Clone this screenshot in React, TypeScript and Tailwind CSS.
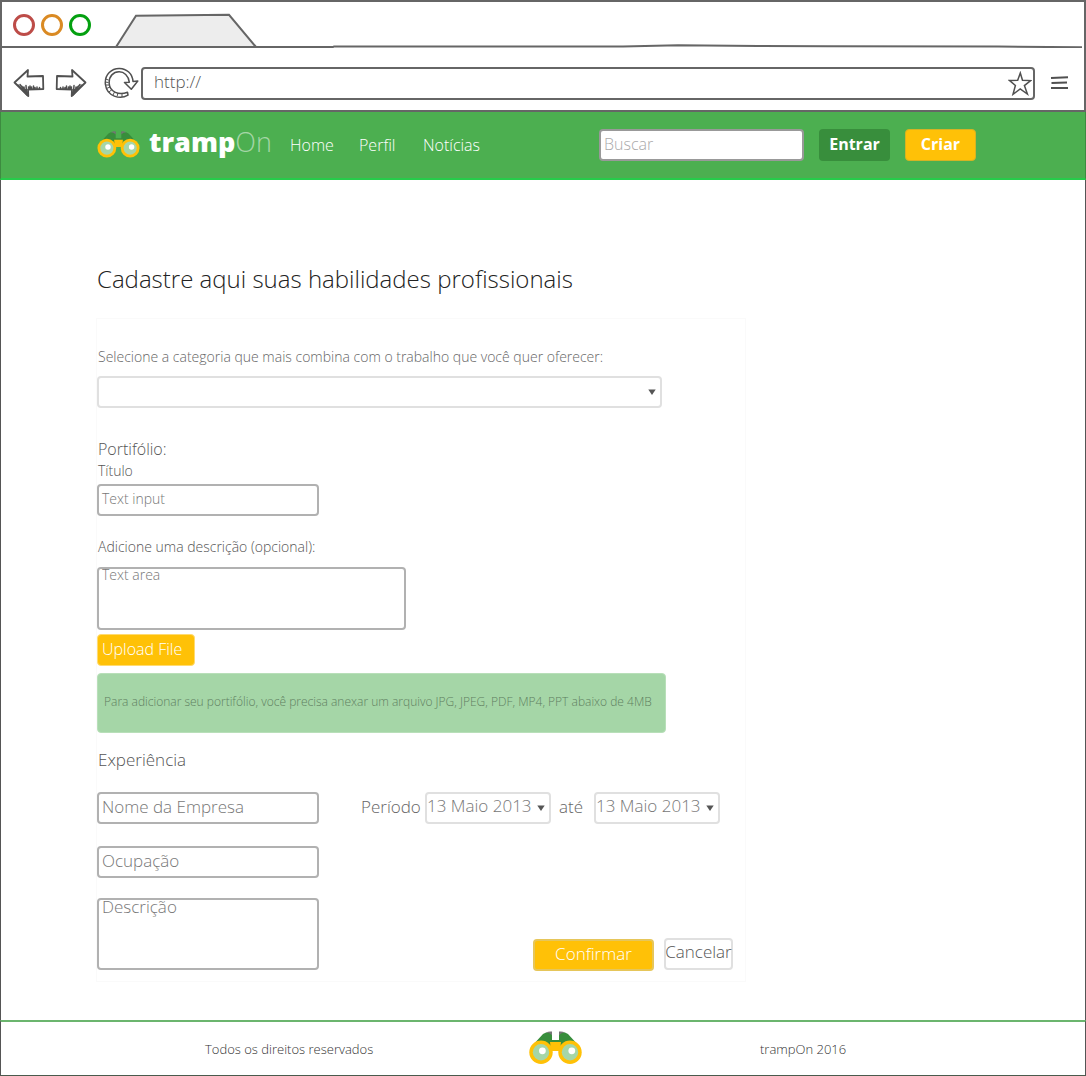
import type { ReactNode } from "react";

function Binoculars({ className }: { className: string }) {
  return (
    <svg className={className} viewBox="0 0 53 33" aria-hidden="true">
      <path d="M3 15 L14 3 Q17 0.5 23 1 L23 9 L30 9 L30 1 Q36 0.5 39 3 L50 15 L41 22 L30 14 L23 14 L12 22 Z" fill="#388e3c" />
      <path d="M17 1.5 Q20 0 23 .6 V4.5 Q21 1.5 17 1.5 Z M36 1.5 Q33 0 30 .6 V4.5 Q32 1.5 36 1.5 Z" fill="#757575" />
      <path d="M21 11 H32 L31 20 H22 Z" fill="#ffc107" />
      <circle cx="12" cy="21.3" r="11.7" fill="#ffc107" />
      <circle cx="41" cy="21.3" r="11.7" fill="#ffc107" />
      <circle cx="12" cy="21.3" r="8.2" fill="#a5d6a7" />
      <circle cx="41" cy="21.3" r="8.2" fill="#a5d6a7" />
      <circle cx="13.4" cy="19.8" r="3.4" fill="#fff" />
      <circle cx="42.8" cy="19.8" r="3.4" fill="#fff" />
    </svg>
  );
}

function Arrow({ className }: { className: string }) {
  return (
    <svg className={className} viewBox="0 0 32 30" fill="none" stroke="#505050" strokeLinecap="round" strokeLinejoin="round">
      <path d="M1.5 14.5 L15 2 L14.5 8.5 L30 8 L30.3 21 L15 21.5 L15.3 28 Z" strokeWidth="1.8" />
      <path d="M5 17 L14 27 M7 16.5 L14.5 26 M8.5 18 L15 25 M11 19 L11.5 23 M13 17.5 L13.5 24 M15.5 19 L16 21 M17 18 V21 M18.5 19 V21 M20.5 18 V21 M22 19.5 V21 M24 19 V21 M26.5 19.5 V21" strokeWidth="1.5" />
    </svg>
  );
}

function Reload() {
  return (
    <svg className="h-[32px] w-[35px]" viewBox="0 0 35 32" fill="none" stroke="#505050" strokeLinejoin="round">
      <path
        d="M23.5 25.2 L24 28.2 C16 32.8 3 29.5 1.4 17.5 C.3 7 8 1.2 15.5 1.4 C22.5 1.5 28.5 6.5 29 14.5 L33.8 14 L27.3 22.3 L20.5 15.5 L25.3 15.2 C24.5 8.5 20 4.7 15 4.8 C9.5 4.9 4.7 9 5.2 16.5 C5.8 25 15 28.8 23.5 25.2 Z"
        strokeWidth="1.5"
      />
      <path d="M1.5 12 L4.5 13 M1 15 L4.5 15.5 M1.5 18 L5 18 M2.5 21.5 L6 20 M5 25 L8 22.5 M9 28 L10.5 25 M13 29.5 L14 26 M18 30 V26.5" strokeWidth="1" />
    </svg>
  );
}

function Browser() {
  return (
    <div className="h-[112px] border-2 border-[#666] bg-white">
      <div className="flex h-[46px]">
        <div className="flex gap-[6px] pt-[12px] pl-[11px]">
          <i className="size-[22px] rounded-full border-3 border-[#bd4c48]" />
          <i className="size-[22px] rounded-full border-3 border-[#da8a23]" />
          <i className="size-[22px] rounded-full border-3 border-[#04a010]" />
        </div>
        <svg className="-ml-[91px] h-[46px] w-[1082px] shrink-0" viewBox="2 2 1082 46" fill="none" stroke="#666" strokeWidth="2">
          <path d="M118 47 L138 15.7 L231 14.8 L258 47" fill="#ededed" />
          <path d="M0 47 H335 L336 46.4 H625 L680 45.3 L760 46 L830 46.3 L1000 46.6 L1086 47.3" />
        </svg>
      </div>
      <div className="flex h-[62px] items-start">
        <Arrow className="mt-[20px] ml-[11px] h-[30px] w-[32px]" />
        <Arrow className="mt-[20px] ml-[10px] h-[30px] w-[32px] -scale-x-100" />
        <div className="mt-[19px] ml-[17px]"><Reload /></div>
        <div className="mt-[19px] ml-[2px] flex h-[33px] w-[894px] items-start justify-between rounded-[4px] border-2 border-[#666] pl-[11px]">
          <span className="text-[17px] leading-[26px] text-[#555]">http://</span>
          <svg className="mt-[2px] mr-[1px] h-[25px] w-[24px]" viewBox="0 0 24 25" fill="none" stroke="#505050" strokeWidth="1.5">
            <path d="M12.3 2 L14.5 9.3 L22.7 9.6 L16.4 14.6 L19.4 23 L12.2 18 L5 23.3 L7.4 14.5 L1.4 9.4 L9.7 9.2 Z" />
          </svg>
        </div>
        <svg className="mt-[27px] ml-[15px] h-[16px] w-[20px]" viewBox="0 0 20 16" stroke="#505050" strokeWidth="2">
          <path d="M1 3 L18 2.3 M1.5 8 L17 7.5 M1 13 H18" />
        </svg>
      </div>
    </div>
  );
}

function Header() {
  return (
    <header className="flex h-[68px] items-start border-x border-b-2 border-x-[#3d8b40] border-b-[#26cc4a] bg-[#4caf50] text-white">
      <Binoculars className="mt-[19px] ml-[96px] h-[26.5px] w-[43px]" />
      <div className="ml-[9px] mt-[12px] w-[141px] text-[27px] leading-[36px] font-extrabold tracking-[0px] whitespace-nowrap">
        tramp<span className="font-light text-[#a5d6a7]">On</span>
      </div>
      <nav className="mt-[22px] flex text-[16px] leading-[22px] font-light">
        <a className="w-[69px]">Home</a>
        <a className="w-[64px]">Perfil</a>
        <a className="w-[176px]">Notícias</a>
      </nav>
      <div className="mt-[17px] h-[32px] w-[205px] rounded-[4px] border-2 border-[#999] bg-white pl-[3px] text-[16px] leading-[27px] text-[#aaa]">
        Buscar
      </div>
      <button className="mt-[17px] ml-[15px] h-[32px] w-[71px] rounded-[4px] bg-[#388e3c] pb-[2px] text-[16px] leading-[24px] font-bold">Entrar</button>
      <button className="mt-[17px] ml-[15px] h-[32px] w-[71px] rounded-[4px] border border-[#d5b324] bg-[#ffc107] pb-[2px] text-[16px] leading-[24px] font-bold">Criar</button>
    </header>
  );
}

function Field({ className, children }: { className: string; children?: ReactNode }) {
  return <div className={`rounded-[4px] border-2 border-[#b1b1b1] pl-[3px] whitespace-nowrap text-[#777] ${className}`}>{children}</div>;
}

function Caret() {
  return (
    <svg className="h-[6px] w-[8px]" viewBox="0 0 8 6">
      <path d="M0.3 0.5 H7.7 L4 6 Z" fill="#555" />
    </svg>
  );
}

function DateSelect({ className }: { className: string }) {
  return (
    <div className={`flex h-[32px] w-[126px] items-start justify-between rounded-[4px] border-2 border-[#e0e0e0] pr-[4px] text-[17px] leading-[24px] text-[#777] ${className}`}>
      <span>13 Maio 2013</span>
      <span className="mt-[11px] flex"><Caret /></span>
    </div>
  );
}

export default function App() {
  return (
    <div className="flex h-[1076px] w-[1086px] flex-col overflow-hidden bg-white font-['Open_Sans',sans-serif] font-light">
      <Browser />
      <Header />
      <main className="h-[840px] border-x border-[#555] pl-[95px]">
        <h1 className="mt-[83px] ml-px h-[32px] text-[24px] leading-[32px] text-[#222]">Cadastre aqui suas habilidades profissionais</h1>
        <form className="mt-[23px] flex h-[664px] w-[650px] flex-col items-start border border-[#fafafa]">
          <label className="mt-[28px] ml-px text-[14px] leading-[20px] text-[#666]">
            Selecione a categoria que mais combina com o trabalho que você quer oferecer:
          </label>
          <div className="mt-[9px] flex h-[32px] w-[565px] items-center justify-end rounded-[4px] border-2 border-[#e0e0e0] pr-[4px]"><Caret /></div>
          <h2 className="mt-[30px] ml-px text-[16px] leading-[22px] text-[#555]">Portifólio:</h2>
          <label className="ml-px text-[14px] leading-[22px] text-[#555]">Título</label>
          <Field className="mt-[2px] h-[32px] w-[222px] text-[14px] leading-[26px]">Text input</Field>
          <label className="mt-[21px] ml-px text-[14px] leading-[20px] text-[#555]">Adicione uma descrição (opcional):</label>
          <Field className="mt-[10px] h-[63px] w-[309px] text-[14px] leading-[12px]">Text area</Field>
          <button type="button" className="mt-[4px] h-[32px] w-[98px] rounded-[4px] border border-[#ffdb70] bg-[#ffc107] pb-[2px] pl-[4px] text-left text-[16px] leading-[24px] text-white">Upload File</button>
          <p className="mt-[7px] h-[60px] w-[569px] rounded-[4px] border border-[#b8dfb9] bg-[#a5d6a7] pl-[6px] text-[12px] leading-[56px] whitespace-nowrap text-[#5f7f61]">
            Para adicionar seu portifólio, você precisa anexar um arquivo JPG, JPEG, PDF, MP4, PPT abaixo de 4MB
          </p>
          <h2 className="mt-[15px] ml-px text-[17px] leading-[24px] text-[#555]">Experiência</h2>
          <div className="mt-[20px] flex items-start text-[17px] text-[#666]">
            <Field className="h-[32px] w-[222px] leading-[25px]">Nome da Empresa</Field>
            <span className="ml-[42px] w-[64px] leading-[30px]">Período</span>
            <DateSelect className="" />
            <span className="ml-[8px] w-[35px] leading-[30px]">até</span>
            <DateSelect className="" />
          </div>
          <Field className="mt-[22px] h-[32px] w-[222px] text-[17px] leading-[25px]">Ocupação</Field>
          <div className="mt-[20px] flex items-start text-[17px]">
            <Field className="h-[72px] w-[222px] leading-[14px]">Descrição</Field>
            <button type="button" className="mt-[41px] ml-[214px] h-[32px] w-[121px] rounded-[4px] border-2 border-[#e6c65a] bg-[#ffc107] pb-[3px] leading-[24px] text-white">Confirmar</button>
            <button type="button" className="mt-[40px] ml-[10px] flex h-[32px] w-[69px] justify-center rounded-[4px] border-2 border-[#e0e0e0] leading-[24px] text-[#555]">Cancelar</button>
          </div>
        </form>
      </main>
      <footer className="flex h-[56px] items-start border-x border-t-2 border-b border-x-[#555] border-t-[#6bb56e] border-b-[#4a5a4c] text-[13px] leading-[20px] text-[#333]">
        <span className="mt-[17px] ml-[204px] w-[324px]">Todos os direitos reservados</span>
        <Binoculars className="mt-[9px] h-[33px] w-[53px]" />
        <span className="mt-[17px] ml-[178px]">trampOn 2016</span>
      </footer>
    </div>
  );
}
